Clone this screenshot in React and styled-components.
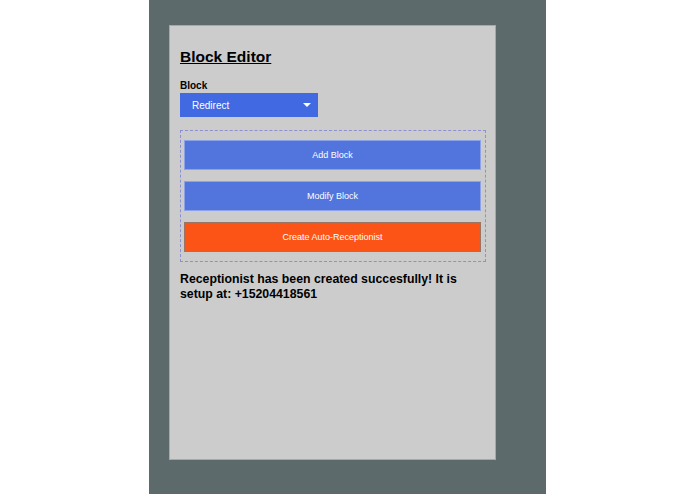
import React, { useState } from 'react';
import styled, { createGlobalStyle } from 'styled-components';

const GlobalStyle = createGlobalStyle`
    html, body {
        margin: 0;
        padding: 0;
        background: #ffffff;
        font-family: "Liberation Sans", Arial, sans-serif;
    }
`;

const Page = styled.div`
    display: flex;
    justify-content: center;
    min-height: 100vh;
`;

const Panel = styled.div`
    width: 397px;
    min-height: 494px;
    background: #5c6a6b;
    padding: 25px 0 0 20px;
    box-sizing: border-box;
`;

const Card = styled.div`
    width: 327px;
    height: 435px;
    box-sizing: border-box;
    background: #cccccc;
    border: 1px solid #a8a8a8;
    padding: 0 9px 0 10px;
`;

const Title = styled.h1`
    margin: 22px 0 0;
    font-size: 15.5px;
    line-height: 18px;
    font-weight: bold;
    color: #000;
    text-decoration: underline;
`;

const Label = styled.label`
    display: block;
    margin-top: 14px;
    font-size: 10px;
    line-height: 12px;
    font-weight: bold;
    color: #000;
`;

const Select = styled.div`
    position: relative;
    margin-top: 1px;
    width: 138px;
    height: 24px;
    background: #4169e1;
    color: #fff;
    font-size: 10px;
    display: flex;
    align-items: center;
    padding-left: 12px;
    box-sizing: border-box;
    cursor: pointer;
    svg {
        position: absolute;
        right: 7px;
        top: 10px;
    }
`;

const Group = styled.div`
    margin-top: 13px;
    width: 306px;
    box-sizing: border-box;
    border: 1px dashed #8c8fd0;
    padding: 9px 4px 9px 3px;
    display: flex;
    flex-direction: column;
    gap: 11px;
`;

const Button = styled.button`
    height: 30px;
    width: 100%;
    border: 1px solid ${p => p.$danger ? '#9a7464' : '#8ea2e6'};
    background: ${p => p.$danger ? '#fc5417' : '#5174dd'};
    color: #fff;
    font-family: inherit;
    font-size: 9px;
    padding: 0 0 1px;
    cursor: pointer;
`;

const Message = styled.p`
    margin: 10px 0 0;
    max-width: 288px;
    font-size: 12.3px;
    line-height: 15px;
    font-weight: bold;
    color: #000;
`;

const App = () => {
    const [block] = useState('Redirect');

    return (
        <Page>
            <GlobalStyle />
            <Panel>
                <Card>
                    <Title>Block Editor</Title>
                    <Label>Block</Label>
                    <Select>
                        {block}
                        <svg width="8" height="4" viewBox="0 0 8 4">
                            <path d="M0 0 L8 0 L4 4 Z" fill="#fff" />
                        </svg>
                    </Select>
                    <Group>
                        <Button>Add Block</Button>
                        <Button>Modify Block</Button>
                        <Button $danger>Create Auto-Receptionist</Button>
                    </Group>
                    <Message>Receptionist has been created succesfully! It is setup at: +15204418561</Message>
                </Card>
            </Panel>
        </Page>
    );
};

export default App;
